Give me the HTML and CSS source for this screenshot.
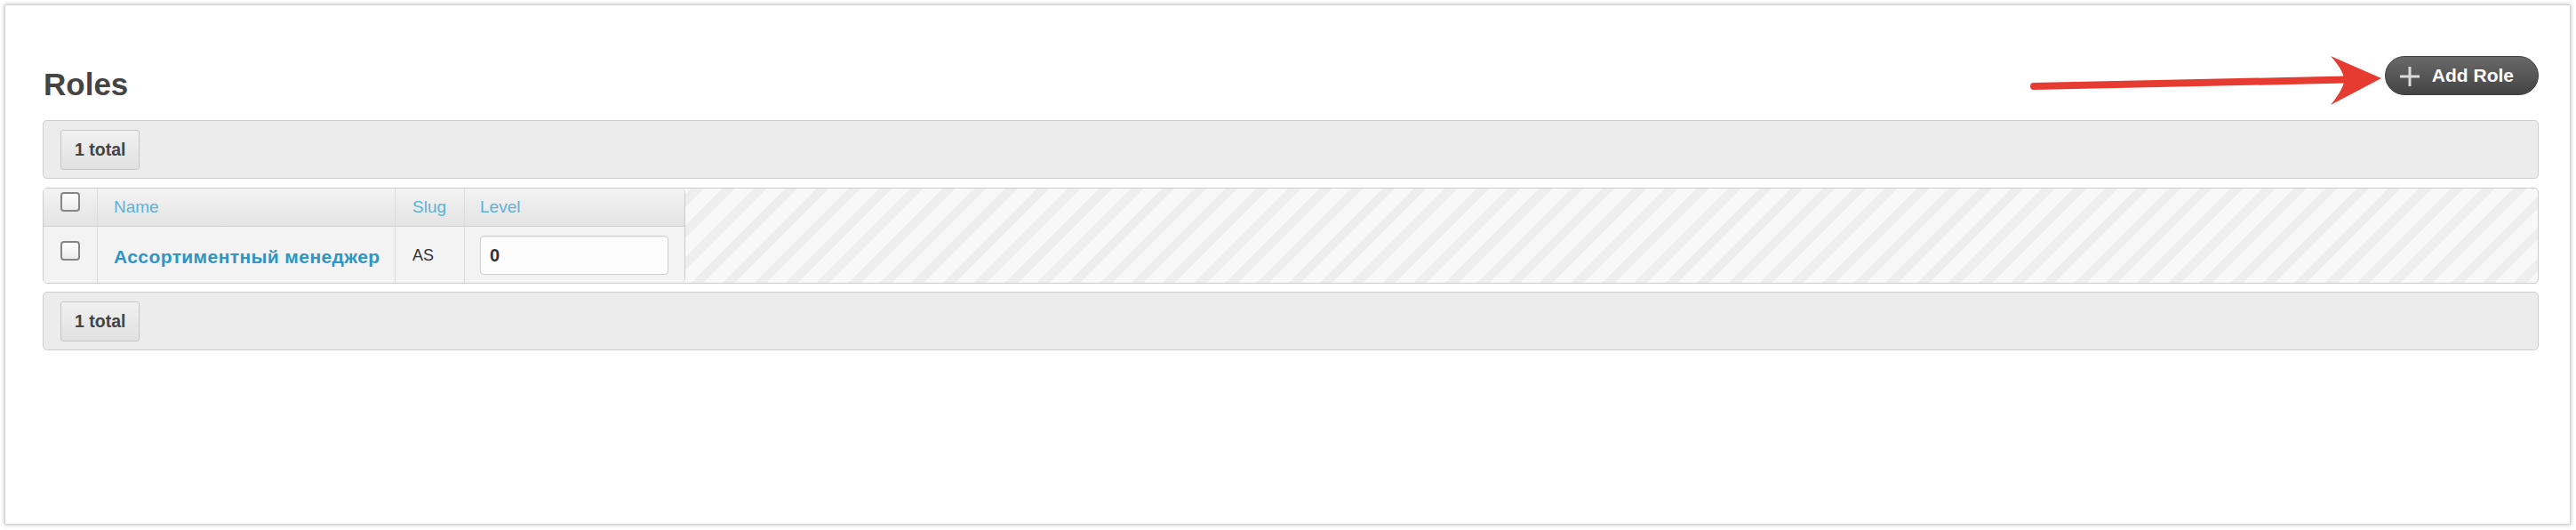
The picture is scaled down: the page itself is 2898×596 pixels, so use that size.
FILE: index.html
```html
<!DOCTYPE html>
<html lang="en">
<head>
<meta charset="utf-8">
<title>Roles</title>
<link rel="stylesheet" href="styles.css">
</head>
<body>
<div class="frame">
  <div class="page-head">
    <h1 class="title">Roles</h1>
    <button class="btn-add" type="button">
      <svg class="plus" width="22" height="22" viewBox="0 0 22 22" aria-hidden="true">
        <rect x="9.5" y="0" width="3" height="22" fill="#dcdcdc"/>
        <rect x="0" y="9.5" width="22" height="3" fill="#dcdcdc"/>
      </svg>
      <span>Add Role</span>
    </button>
  </div>

  <div class="pager">
    <span class="count">1 total</span>
  </div>

  <div class="grid">
    <table class="grid-table">
      <thead>
        <tr>
          <th class="col-check"><input class="cb" type="checkbox"></th>
          <th class="col-name"><a href="#">Name</a></th>
          <th class="col-slug"><a href="#">Slug</a></th>
          <th class="col-level"><a href="#">Level</a></th>
        </tr>
      </thead>
      <tbody>
        <tr>
          <td class="col-check"><input class="cb" type="checkbox"></td>
          <td class="col-name cell-name"><a class="name-link" href="#">Ассортиментный менеджер</a></td>
          <td class="col-slug cell-slug">AS</td>
          <td class="col-level"><input class="level-input" type="text" value="0"></td>
        </tr>
      </tbody>
    </table>
  </div>

  <div class="pager pager-bottom">
    <span class="count">1 total</span>
  </div>
</div>

<svg class="annotation" width="2898" height="596" viewBox="0 0 2898 596" aria-hidden="true">
  <line x1="2288" y1="97" x2="2640" y2="89.5" stroke="#e53b30" stroke-width="8" stroke-linecap="round"/>
  <path d="M2622 63 L2679 88 L2622 118 Q2638 98 2637 89.5 Q2637 80 2622 63 Z" fill="#e53b30"/>
</svg>
</body>
</html>
```

FILE: styles.css
```css
* {
  box-sizing: border-box;
}

html, body {
  margin: 0;
  padding: 0;
  background: #ffffff;
}

body {
  position: relative;
  width: 2898px;
  height: 596px;
  overflow: hidden;
  font-family: "Liberation Sans", Arial, Helvetica, sans-serif;
  color: #444;
}

.frame {
  margin: 5px 6px 6px 5px;
  height: 585px;
  background: #fff;
  border: 1px solid #d4d4d4;
  box-shadow: 0 0 4px rgba(0, 0, 0, 0.28);
  padding: 57px 35px 0 42px;
}

.page-head {
  display: flex;
  justify-content: space-between;
  align-items: flex-start;
}

.title {
  margin: 12px 0 0 1px;
  font-size: 35px;
  line-height: 40px;
  font-weight: bold;
  color: #444;
}

.btn-add {
  display: flex;
  align-items: center;
  height: 44px;
  padding: 0 27px 0 16px;
  border: 1px solid #3e3e3e;
  border-radius: 22px;
  background: linear-gradient(#696969, #444444);
  color: #fff;
  font-family: "Liberation Sans", Arial, sans-serif;
  font-size: 21px;
  font-weight: bold;
  line-height: 42px;
  cursor: pointer;
}

.btn-add .plus {
  margin-right: 14px;
  margin-top: 1px;
}

.pager {
  margin-top: 20px;
  border: 1px solid #cdcdcd;
  border-radius: 5px;
  background: #ececec;
  padding: 10px 19px 9px;
}

.pager-bottom {
  margin-top: 9px;
}

.count {
  display: inline-block;
  height: 45px;
  line-height: 43px;
  padding: 0 15px;
  border: 1px solid #c6c6c6;
  border-radius: 3px;
  background: linear-gradient(#f1f1f1, #e1e1e1);
  color: #444;
  font-size: 19.5px;
  font-weight: bold;
}

.grid {
  margin-top: 10px;
  border: 1px solid #cccccc;
  border-radius: 5px;
  overflow: hidden;
  background: repeating-linear-gradient(135deg, #f8f8f8 0, #f8f8f8 15px, #eeeeee 15px, #eeeeee 25px);
}

.grid-table {
  border-collapse: separate;
  border-spacing: 0;
  border-right: 1px solid #cccccc;
  border-radius: 0 5px 5px 0;
  overflow: hidden;
  background: #f3f3f3;
}

.grid-table th {
  height: 43px;
  padding: 0;
  text-align: left;
  font-weight: normal;
  font-size: 19px;
  background: linear-gradient(#f3f3f3, #e3e3e3);
  border-bottom: 1px solid #d2d2d2;
  vertical-align: middle;
}

.grid-table th a {
  color: #5db2d6;
  text-decoration: none;
}

.grid-table td {
  height: 63px;
  padding: 0;
  background: #f3f3f3;
  vertical-align: middle;
  font-size: 18px;
  color: #333;
}

.grid-table td.cell-name {
  padding-top: 5px;
}

.grid-table td.cell-slug {
  padding-top: 2px;
}

.col-check {
  width: 61px;
  text-align: center !important;
  border-right: 1px solid #dcdcdc;
}

.grid-table th.col-check {
  vertical-align: top;
  padding-top: 4px;
}

.grid-table td.col-check {
  vertical-align: top;
  padding-top: 16px;
}

.col-name {
  width: 335px;
  padding-left: 18px !important;
  border-right: 1px solid #dcdcdc;
}

.col-slug {
  width: 78px;
  padding-left: 19px !important;
  border-right: 1px solid #dcdcdc;
}

.col-level {
  width: 247px;
  padding-left: 17px !important;
}

.cb {
  -webkit-appearance: none;
  appearance: none;
  display: inline-block;
  width: 22px;
  height: 22px;
  margin: 0;
  border: 2px solid #858585;
  border-radius: 4px;
  background: linear-gradient(#ffffff, #ececec);
  vertical-align: top;
}

.name-link {
  color: #2f95c2;
  font-weight: bold;
  font-size: 21px;
  letter-spacing: 0.4px;
  text-decoration: none;
}

.level-input {
  display: block;
  width: 212px;
  height: 44px;
  margin: 1px 0 0;
  padding: 0 10px;
  border: 1px solid #cfcfcf;
  border-radius: 4px;
  background: #fdfdfd;
  box-shadow: inset 0 1px 2px rgba(0, 0, 0, 0.06);
  font-family: "Liberation Sans", Arial, sans-serif;
  font-size: 20px;
  font-weight: bold;
  color: #333;
}

.annotation {
  position: absolute;
  left: 0;
  top: 0;
  pointer-events: none;
}
```
